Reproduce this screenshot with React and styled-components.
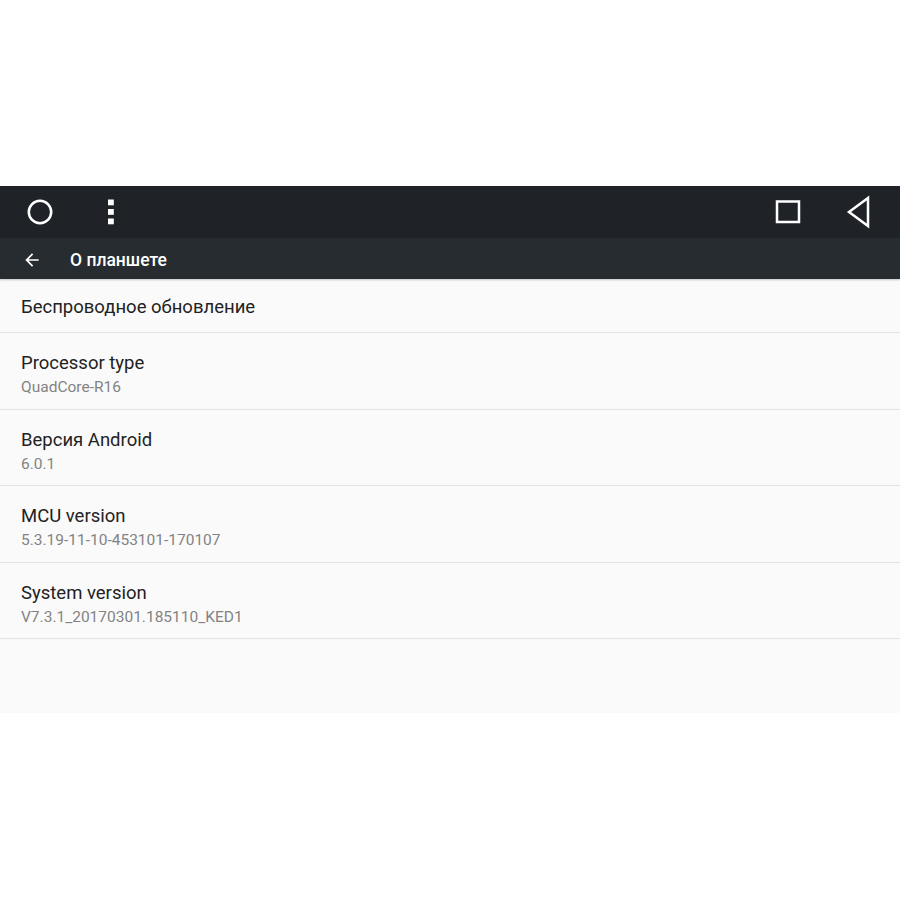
import React from "react";
import styled, { createGlobalStyle } from "styled-components";

const items = [
    { title: "Беспроводное обновление" },
    { title: "Processor type", summary: "QuadCore-R16" },
    { title: "Версия Android", summary: "6.0.1" },
    { title: "MCU version", summary: "5.3.19-11-10-453101-170107" },
    { title: "System version", summary: "V7.3.1_20170301.185110_KED1" },
];

function App() {
    return (
        <>
            <GlobalStyle />
            <Page>
                <Screen>
                    <NavBar>
                        <NavGroup gap="52px">
                            <NavButton>
                                <svg width="28" height="28" viewBox="0 0 28 28">
                                    <circle cx="14" cy="14" r="11.2" fill="none" stroke="#fff" strokeWidth="2.5" />
                                </svg>
                            </NavButton>
                            <NavButton>
                                <svg width="10" height="28" viewBox="0 0 10 28">
                                    <rect x="2" y="1.5" width="5.8" height="5.8" fill="#fff" />
                                    <rect x="2" y="11" width="5.8" height="5.8" fill="#fff" />
                                    <rect x="2" y="20.5" width="5.8" height="5.8" fill="#fff" />
                                </svg>
                            </NavButton>
                        </NavGroup>
                        <NavGroup gap="42px">
                            <NavButton>
                                <svg width="28" height="28" viewBox="0 0 28 28">
                                    <rect x="3" y="3.5" width="22" height="20.5" fill="none" stroke="#fff" strokeWidth="2.5" />
                                </svg>
                            </NavButton>
                            <NavButton>
                                <svg width="28" height="34" viewBox="0 0 28 34">
                                    <path d="M24 3 L5 17 L24 31 Z" fill="none" stroke="#fff" strokeWidth="2.5" strokeLinejoin="miter" />
                                </svg>
                            </NavButton>
                        </NavGroup>
                    </NavBar>
                    <Toolbar>
                        <BackButton>
                            <svg width="20" height="20" viewBox="0 0 24 24">
                                <path d="M20 11H7.83l5.59-5.59L12 4l-8 8 8 8 1.41-1.41L7.83 13H20v-2z" fill="#fff" />
                            </svg>
                        </BackButton>
                        <ToolbarTitle>О планшете</ToolbarTitle>
                    </Toolbar>
                    <List>
                        {items.map((item) => (
                            <Row key={item.title} single={!item.summary}>
                                <Title>{item.title}</Title>
                                {item.summary && <Summary>{item.summary}</Summary>}
                            </Row>
                        ))}
                    </List>
                </Screen>
            </Page>
        </>
    );
}

export default App;

const GlobalStyle = createGlobalStyle`
    body {
        margin: 0;
        background: #fff;
        font-family: Roboto, "Noto Sans", sans-serif;
    }
`;

const Page = styled.div`
    width: 900px;
    height: 900px;
    padding-top: 186px;
    box-sizing: border-box;
`;

const Screen = styled.div`
    width: 900px;
    height: 527px;
    background: #fafafa;
    display: flex;
    flex-direction: column;
`;

const NavBar = styled.div`
    height: 52px;
    background: #1f2328;
    display: flex;
    justify-content: space-between;
    align-items: center;
    padding: 0 28px 0 26px;
`;

const NavGroup = styled.div`
    display: flex;
    align-items: center;
    gap: ${(props) => props.gap};
`;

const NavButton = styled.div`
    display: flex;
    align-items: center;
    justify-content: center;
`;

const Toolbar = styled.div`
    height: 41px;
    background: #272c31;
    display: flex;
    align-items: center;
    padding: 2px 0 0 22px;
    box-sizing: border-box;
    box-shadow: 0 1px 2px rgba(0, 0, 0, 0.22);
    position: relative;
    z-index: 1;
`;

const BackButton = styled.div`
    display: flex;
    align-items: center;
    width: 20px;
    height: 20px;
`;

const ToolbarTitle = styled.div`
    margin-left: 28px;
    color: #fff;
    font-size: 17.5px;
    font-weight: 500;
`;

const List = styled.div`
    display: flex;
    flex-direction: column;
`;

const Row = styled.div`
    height: ${(props) => (props.single ? "54px" : "76.5px")};
    box-sizing: border-box;
    padding: ${(props) => (props.single ? "16px" : "18px")} 21px 0;
    display: flex;
    flex-direction: column;
    border-bottom: 1px solid #e3e3e3;
`;

const Title = styled.div`
    font-size: 18.5px;
    color: #222;
    line-height: 24px;
`;

const Summary = styled.div`
    margin-top: 1px;
    font-size: 15.5px;
    color: #838383;
    line-height: 22px;
`;
